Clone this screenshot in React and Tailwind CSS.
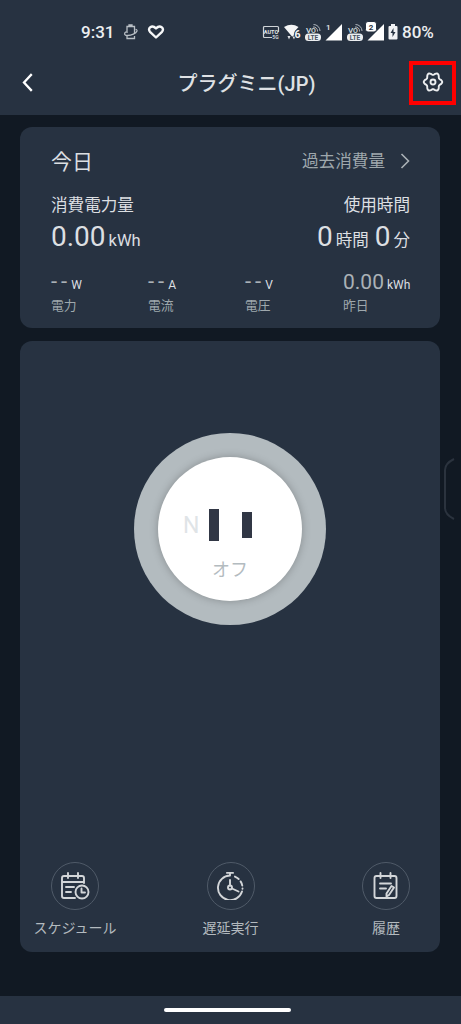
const jp = "font-[Roboto,'Noto_Sans_CJK_JP',sans-serif]";

// six-lobed outline around (11, 11)
const gearPath =
  Array.from({ length: 72 }, (_, i) => {
    const a = (i * Math.PI) / 36;
    const r = 8.1 + 1.15 * Math.cos(6 * a);
    return `${i ? "L" : "M"}${(11 + r * Math.cos(a)).toFixed(2)} ${(11 + r * 1.03 * Math.sin(a)).toFixed(2)}`;
  }).join("") + "z";

const VoLte = ({ className }) => (
  <svg viewBox="0 0 18 22" className={`h-[22px] w-[18px] ${className}`}>
    <text x="2" y="12" fontSize="8" fontFamily="Roboto" fontWeight="500" fill="#dfe2e5">
      V
    </text>
    <text x="7" y="12" fontSize="7" fontFamily="Roboto" fontWeight="500" fill="#dfe2e5">
      O
    </text>
    <path d="M9 6a4 4 0 0 1 4.500 4.500M9.500 3.500a6.500 6.500 0 0 1 6.500 6.500" fill="none" stroke="#aeb5bc" strokeWidth="1" />
    <rect x="1" y="12.500" width="16" height="7.500" rx="3.500" fill="#eceef0" />
    <text x="9" y="18.600" fontSize="6.500" fontFamily="Roboto" fontWeight="700" fill="#465260" textAnchor="middle">
      LTE
    </text>
  </svg>
);

const StatusBar = () => (
  <div className="flex h-12 items-center pt-4 text-[#eceef0]">
    <span className="ml-[81px] w-[42px] text-[17px] leading-none font-medium">9:31</span>
    <svg viewBox="0 0 16 18" className="h-[18px] w-4" fill="none" stroke="#b9bfc5" strokeWidth="1.300">
      <path d="M6 3.500V2h3v1.500M4 10V3.500h7.500v7M4 13v2.500h7.500V13" />
      <path d="M3.500 8.500C.5 10 1 12.500 4.500 12.500c4 0 8.500-2 9.500-4.500.2-1-.5-1.500-1.500-1.500" />
    </svg>
    <svg viewBox="0 0 18 16" className="ml-2 h-4 w-[18px]" fill="none" stroke="#f7f8f9" strokeWidth="2.400" strokeLinejoin="round">
      <path d="M9 13.500 3 7.800C0 4.300 4.800.200 9 4.400c4.200-4.200 9-.1 6 3.400z" />
    </svg>
    <svg viewBox="0 0 18 22" className="ml-[97px] h-[22px] w-[18px]">
      <path d="M10 16.500H2.500a1 1 0 0 1-1-1V6.500a1 1 0 0 1 1-1h13a1 1 0 0 1 1 1V11" fill="none" stroke="#cfd3d7" strokeWidth="1.200" />
      <text x="9" y="12.500" fontSize="5.500" fontFamily="Roboto" fontWeight="700" fill="#e4e6e9" textAnchor="middle">
        AUTO
      </text>
      <text x="13.500" y="17.500" fontSize="5" fontFamily="Roboto" fontWeight="700" fill="#cfd3d7" textAnchor="middle">
        5G
      </text>
    </svg>
    <svg viewBox="0 0 18 22" className="ml-[4px] h-[22px] w-[18px]">
      <path d="M0 6q7.500-4.500 14.500 0l-3.500 4-1.500 5L8 15.500z" fill="#f4f5f6" />
      <path d="m3.500 15 1.500 3.500L6.500 15zM8.500 15.500l1.500 3 1.200-3z" fill="#dfe2e5" />
      <text x="10.500" y="16.500" fontSize="10.500" fontFamily="Roboto" fontWeight="700" fill="#f4f5f6" stroke="#273241" strokeWidth="1.500" paintOrder="stroke">
        6
      </text>
    </svg>
    <VoLte className="ml-[2px]" />
    <svg viewBox="0 0 19 22" className="ml-[2px] h-[22px] w-[19px]">
      <path d="M18 3v16.500H1.500z" fill="#fff" />
      <text x="2" y="8.500" fontSize="8" fontFamily="Roboto" fontWeight="500" fill="#eceef0">
        1
      </text>
    </svg>
    <VoLte className="ml-[3px]" />
    <svg viewBox="0 0 20 22" className="ml-px h-[22px] w-5">
      <path d="M19 3v16.500H2.500z" fill="#fff" />
      <rect x=".5" y=".5" width="11" height="10.500" rx="2.500" fill="#fff" stroke="#273241" />
      <text x="6" y="8.700" fontSize="8" fontFamily="Roboto" fontWeight="700" fill="#273241" textAnchor="middle">
        2
      </text>
    </svg>
    <svg viewBox="0 0 10 16" className="ml-[3px] h-4 w-[10px]">
      <path d="M3 0h4v2h1.500a1 1 0 0 1 1 1v11.500a1 1 0 0 1-1 1h-7a1 1 0 0 1-1-1V3a1 1 0 0 1 1-1H3z" fill="#f1f2f4" />
      <path d="M5.500 4 2.500 9H4.500v4l3-5H5.500z" fill="#273241" />
    </svg>
    <span className="ml-[4px] text-[17px] leading-none font-medium">80%</span>
  </div>
);

const TitleBar = () => (
  <div className="flex h-[67px] items-center justify-between pr-[5px] pl-[21px]">
    <svg viewBox="0 0 12 20" className="h-5 w-3" fill="none" stroke="#fff" strokeWidth="2.300" strokeLinecap="square">
      <path d="M10 3 3 10.500 10 18" />
    </svg>
    <h1 className="ml-[51px] pt-[4px] text-[20px] leading-none font-medium text-[#dfe1e4]">プラグミニ(JP)</h1>
    <button className="mt-[2px] flex h-[44px] w-[47px] items-center justify-center border-4 border-[#f00] pl-[2px]">
      <svg viewBox="0 0 22 22" className="-mt-px h-[22px] w-[22px]" fill="none" stroke="#eceef0" strokeWidth="1.900" strokeLinejoin="round">
        <path d={gearPath} />
        <circle cx="11" cy="11" r="2.500" />
      </svg>
    </button>
  </div>
);

const readings = [
  { value: "--", unit: "W", label: "電力" },
  { value: "--", unit: "A", label: "電流" },
  { value: "--", unit: "V", label: "電圧" },
  { value: "0.00", unit: "kWh", label: "昨日" },
];

const UsageCard = () => (
  <section className="h-[201px] rounded-xl bg-[#273241] pt-[23px] pl-[31px] text-[#dcdfe2]">
    <div className="mr-[30px] flex h-6 items-center justify-between">
      <h2 className="text-[21px] leading-6">今日</h2>
      <div className="flex items-center text-[16.600px] leading-6 text-[#9fa8ad]">
        過去消費量
        <svg viewBox="0 0 10 18" className="-mt-[2px] ml-[15px] h-[18px] w-[10px]" fill="none" stroke="#aab1b6" strokeWidth="1.600">
          <path d="m1.500 2 7 7-7 7" />
        </svg>
      </div>
    </div>
    <div className="mt-[20px] mr-[30px] flex justify-between text-[16.600px] leading-6">
      <span>消費電力量</span>
      <span>使用時間</span>
    </div>
    <div className="mt-[3px] mr-[30px] flex h-8 items-baseline justify-between leading-8">
      <div>
        <span className="text-[28px]">0.00</span>
        <span className="ml-[3px] text-[16.500px]">kWh</span>
      </div>
      <div className="text-[16.500px]">
        <span className="text-[28px]">0</span>
        <span className="ml-[3px]">時間</span>
        <span className="ml-[6px] text-[28px]">0</span>
        <span className="ml-[3px]">分</span>
      </div>
    </div>
    <div className="mt-[17px] grid grid-cols-[97px_97px_98px_1fr] text-[#aab1b6]">
      {readings.map(({ value, unit, label }) => (
        <div key={label}>
          <div className="flex h-6 items-baseline leading-6">
            <span className={value === "--" ? "text-[22px] tracking-[4px]" : "text-[21px]"}>{value}</span>
            <span className={value === "--" ? "text-[12px] text-[#dcdfe2]" : "ml-[3px] text-[12px] text-[#dcdfe2]"}>
              {unit}
            </span>
          </div>
          <div className="text-[12.800px] leading-6 text-[#9fa8ad]">{label}</div>
        </div>
      ))}
    </div>
  </section>
);

const PowerButton = () => (
  <button className="mx-auto flex size-[192px] items-center justify-center rounded-full bg-[#b3bbbf]">
    <span className="flex size-[144px] flex-col items-center rounded-full bg-white pt-[52px] shadow-[0_0_8px_rgba(0,0,0,0.25)]">
      <span className="flex h-8 w-full items-center pl-[25px]">
        <span className="w-[26px] pt-px text-left text-[23px] leading-8 text-[#dfe4e7]">N</span>
        <span className="h-8 w-[10px] bg-[#313745]" />
        <span className="ml-[23px] h-[26px] w-[10px] bg-[#313745]" />
      </span>
      <span className="mt-[17px] text-[18px] leading-6 text-[#b3bbbf]">オフ</span>
    </span>
  </button>
);

const ScheduleIcon = () => (
  <>
    <path d="M15 26H4a2 2 0 0 1-2-2V6a2 2 0 0 1 2-2h18a2 2 0 0 1 2 2v5M2 10h22M8 1v5M18 1v5M6 15h8M6 20h5" />
    <circle cx="22" cy="20" r="6.500" />
    <path d="M21.500 16.500v4H25" />
  </>
);

const TimerIcon = () => (
  <>
    <path d="M14 3.500a12.300 12.300 0 1 0 12 16M11 .9h6M14 1v2.500" />
    <path d="M18 4.200a12.500 12.500 0 0 1 8.500 12.500" strokeDasharray="4.500 3" strokeDashoffset="-1" />
    <circle cx="14" cy="15.500" r="2" />
    <path d="M14 8v5.500M16 16.500l6.500 3" />
  </>
);

const HistoryIcon = () => (
  <>
    <rect x="3.500" y="4" width="22" height="22" rx="2" />
    <path d="M9.500 1v5M19.500 1v5M9 11.500h11M9 16.500h6" />
    <path d="m20.500 14-5 7.500v3l2.500-1.500 5-7.500z" />
  </>
);

const actions = [
  { label: "スケジュール", Icon: ScheduleIcon },
  { label: "遅延実行", Icon: TimerIcon },
  { label: "履歴", Icon: HistoryIcon },
];

const Action = ({ label, Icon }) => (
  <button className="flex w-[84px] flex-col items-center">
    <span className="flex size-12 items-center justify-center rounded-full border border-[#4f5a68]">
      <svg viewBox="0 0 30 28" className="h-7 w-[30px]" fill="none" stroke="#d3d6d9" strokeWidth="1.900" strokeLinecap="round" strokeLinejoin="round">
        <Icon />
      </svg>
    </span>
    <span className="mt-[6px] text-[14px] leading-6 whitespace-nowrap text-[#b3babf]">{label}</span>
  </button>
);

export default function App() {
  return (
    <div className={`flex h-[1024px] w-[461px] flex-col overflow-hidden bg-[#111923] ${jp}`}>
      <header className="h-[115px] bg-[#273241]">
        <StatusBar />
        <TitleBar />
      </header>

      <main className="relative flex flex-1 flex-col gap-[13px] pt-3 pr-[21px] pl-5">
        <UsageCard />
        <section className="flex h-[611px] flex-col justify-between rounded-xl bg-[#273241] pt-[92px] pb-[12px]">
          <PowerButton />
          <div className="flex justify-between pr-[12px] pl-[13px]">
            {actions.map((action) => (
              <Action key={action.label} {...action} />
            ))}
          </div>
        </section>
        {/* edge panel handle */}
        <svg viewBox="0 0 12 62" className="absolute top-[343px] right-[6px] h-[62px] w-3" fill="none" stroke="#2b333e" strokeWidth="2">
          <path d="M11 1C5 4 2 7 2 12v38c0 5 3 8 9 11" />
        </svg>
      </main>

      <footer className="flex h-7 items-center justify-center bg-[#273241] pr-[6px]">
        <div className="h-1 w-[127px] rounded-full bg-white" />
      </footer>
    </div>
  );
}
